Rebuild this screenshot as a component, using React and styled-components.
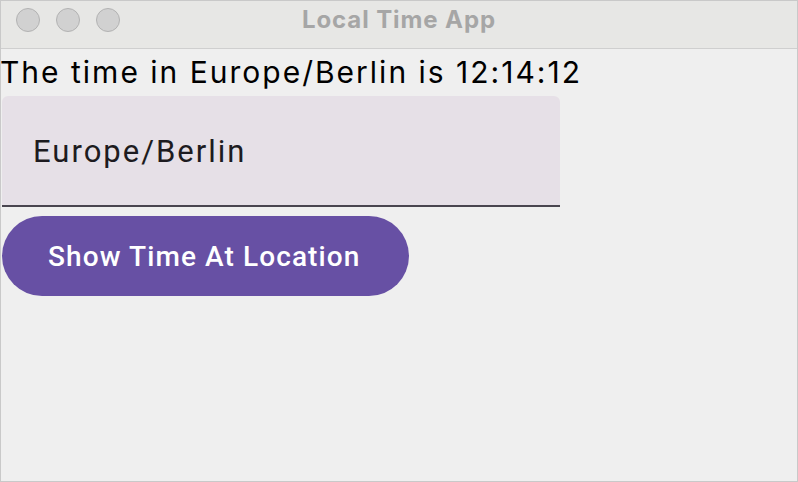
import styled, { createGlobalStyle } from 'styled-components';

const GlobalStyle = createGlobalStyle`
    html, body {
        margin: 0;
        padding: 0;
        background: #efefef;
    }
    * {
        box-sizing: border-box;
    }
`;

const Window = styled.div`
    width: 798px;
    height: 482px;
    display: flex;
    flex-direction: column;
    border: 1px solid #c9c9c9;
    background: #efefef;
    overflow: hidden;
`;

const TitleBar = styled.div`
    position: relative;
    height: 48px;
    flex: none;
    display: flex;
    align-items: center;
    justify-content: center;
    background: #e7e7e5;
    border-bottom: 1px solid #cfcfcf;
`;

const Lights = styled.div`
    position: absolute;
    left: 15px;
    top: 7px;
    display: flex;
    gap: 16px;
`;

const Light = styled.span`
    width: 24px;
    height: 24px;
    border-radius: 50%;
    background: #d1d1d1;
    border: 1px solid #b3b3b3;
`;

const Title = styled.div`
    margin-top: -11px;
    font-family: Inter, "Liberation Sans", sans-serif;
    font-weight: 700;
    font-size: 24px;
    letter-spacing: 0.9px;
    color: #a6a6a6;
`;

const Content = styled.div`
    display: flex;
    flex-direction: column;
    align-items: flex-start;
    padding-left: 1px;
`;

const Heading = styled.div`
    margin-left: -2px;
    font-family: Inter, "Liberation Sans", sans-serif;
    font-size: 30px;
    line-height: 47px;
    height: 47px;
    color: #000;
    letter-spacing: 2px;
    white-space: nowrap;
`;

const Field = styled.div`
    width: 558px;
    height: 111px;
    display: flex;
    align-items: center;
    padding: 2px 0 0 31px;
    background: #e6e0e7;
    border-radius: 6px 6px 0 0;
    border-bottom: 2px solid #49454f;
    font-family: Roboto, "Liberation Sans", sans-serif;
    font-size: 31px;
    color: #1d1b20;
    letter-spacing: 2px;
`;

const Button = styled.button`
    margin-top: 9px;
    width: 407px;
    height: 80px;
    border: none;
    border-radius: 40px;
    background: #6750a4;
    color: #fff;
    font-family: Roboto, "Liberation Sans", sans-serif;
    font-weight: 500;
    font-size: 28px;
    padding: 0 0 0 46px;
    text-align: left;
    letter-spacing: 1.1px;
    white-space: nowrap;
`;

export default function App() {
    const zone = "Europe/Berlin";
    return <>
        <GlobalStyle />
        <Window>
            <TitleBar>
                <Lights>
                    <Light />
                    <Light />
                    <Light />
                </Lights>
                <Title>Local Time App</Title>
            </TitleBar>
            <Content>
                <Heading>The time in {zone} is 12:14:12</Heading>
                <Field>{zone}</Field>
                <Button>Show Time At Location</Button>
            </Content>
        </Window>
    </>;
}
